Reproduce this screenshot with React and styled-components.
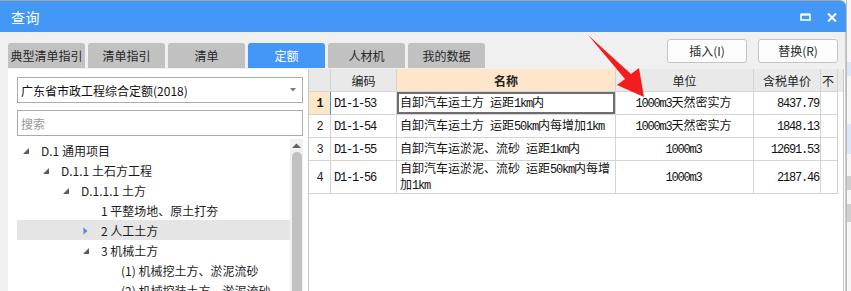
import React from "react";
import styled, { createGlobalStyle } from "styled-components";

const BLUE = "#4398f7";
const GRID = "#d4d4d4";

const GlobalStyle = createGlobalStyle`
  * { box-sizing: border-box; }
  body {
    margin: 0;
    background: #f4f4f4;
    font-family: "Noto Sans CJK SC", "Noto Sans", sans-serif;
    color: #1e1e1e;
  }
`;

const tabs = ["典型清单指引", "清单指引", "清单", "定额", "人材机", "我的数据"];
const ACTIVE_TAB = "定额";

// state: open = 展开, closed = 折叠, leaf = 无子项
const tree = [
  { level: 1, state: "open", label: "D.1 通用项目" },
  { level: 2, state: "open", label: "D.1.1 土石方工程" },
  { level: 3, state: "open", label: "D.1.1.1 土方" },
  { level: 4, state: "leaf", label: "1 平整场地、原土打夯" },
  { level: 4, state: "closed", label: "2 人工土方", selected: true },
  { level: 4, state: "open", label: "3 机械土方" },
  { level: 5, state: "leaf", label: "(1) 机械挖土方、淤泥流砂" },
  { level: 5, state: "leaf", label: "(2) 机械挖装土方、淤泥流砂" },
];

const columns = [
  { key: "no", title: "" },
  { key: "code", title: "编码" },
  { key: "name", title: "名称", hot: true },
  { key: "unit", title: "单位" },
  { key: "price", title: "含税单价" },
  { key: "extra", title: "不" },
];

const rows = [
  { code: "D1-1-53", name: ["自卸汽车运土方 运距1km内"], unit: "1000m3天然密实方", price: "8437.79" },
  { code: "D1-1-54", name: ["自卸汽车运土方 运距50km内每增加1km"], unit: "1000m3天然密实方", price: "1848.13" },
  { code: "D1-1-55", name: ["自卸汽车运淤泥、流砂 运距1km内"], unit: "1000m3", price: "12691.53" },
  { code: "D1-1-56", name: ["自卸汽车运淤泥、流砂 运距50km内每增", "加1km"], unit: "1000m3", price: "2187.46", tall: true },
];

// 宋体风格：西文部分用等宽字体，整行放在一个行内容器里保持基线一致
const mixed = (text) => (
  <Line>
    {text
      .split(/([\x20-\x7e]+)/)
      .filter(Boolean)
      .map((part, i) =>
        /^[\x20-\x7e]+$/.test(part) ? <Latin key={i}>{part}</Latin> : <span key={i}>{part}</span>
      )}
  </Line>
);

const App = () => {
  return (
    <>
      <GlobalStyle />
      <Screen>
        <Window>
          <TitleBar>
            <Title>查询</Title>
            <TitleButtons>
              <svg width="11" height="8" viewBox="0 0 11 8">
                <rect x="1" y="1.5" width="9" height="5.5" fill="none" stroke="#fff" strokeWidth="1.6" />
                <rect x="1" y="0.5" width="9" height="2" fill="#fff" />
              </svg>
              <svg width="10" height="9" viewBox="0 0 10 9">
                <path d="M1 0.5 L9 8.5 M9 0.5 L1 8.5" stroke="#fff" strokeWidth="2" />
              </svg>
            </TitleButtons>
          </TitleBar>

          <Body>
            <Toolbar>
              <Tabs>
                {tabs.map((t) => (
                  <Tab key={t} $active={t === ACTIVE_TAB}>
                    {t}
                  </Tab>
                ))}
              </Tabs>
              <Actions>
                <ActionButton>插入(I)</ActionButton>
                <ActionButton>替换(R)</ActionButton>
              </Actions>
            </Toolbar>

            <Content>
              <LeftPanel>
                <Select>
                  <span>广东省市政工程综合定额(2018)</span>
                  <svg width="6" height="4" viewBox="0 0 6 4">
                    <path d="M0 0 H6 L3 3.5 Z" fill="#7a7a7a" />
                  </svg>
                </Select>
                <Search>搜索</Search>
                <TreeArea>
                  <TreeList>
                    {tree.map((node, i) => (
                      <TreeRow key={i} $level={node.level} $selected={node.selected}>
                        <Toggle>
                          {node.state === "open" && (
                            <svg width="6" height="6" viewBox="0 0 6 6">
                              <path d="M6 0 V6 H0 Z" fill="#5c5c5c" />
                            </svg>
                          )}
                          {node.state === "closed" && (
                            <svg width="5" height="8" viewBox="0 0 5 8">
                              <path d="M0.5 0.5 L4.5 4 L0.5 7.5 Z" fill="#3d8fe8" />
                            </svg>
                          )}
                        </Toggle>
                        <TreeLabel>{node.label}</TreeLabel>
                      </TreeRow>
                    ))}
                  </TreeList>
                  <ScrollBar>
                    <svg width="9" height="5" viewBox="0 0 9 5">
                      <path d="M0 5 L4.5 0.5 L9 5 Z" fill="#606060" />
                    </svg>
                    <Thumb />
                  </ScrollBar>
                </TreeArea>
              </LeftPanel>

              <TablePanel>
                <GridRow $header>
                  {columns.map((c) => (
                    <HeadCell key={c.key} $hot={c.hot}>
                      {c.title}
                    </HeadCell>
                  ))}
                </GridRow>
                {rows.map((r, i) => (
                  <GridRow key={r.code} $tall={r.tall}>
                    <NoCell $current={i === 0}>{mixed(String(i + 1))}</NoCell>
                    <Cell $align="left">{mixed(r.code)}</Cell>
                    <Cell $align="left" $focused={i === 0} $wrap={r.tall}>
                      {r.name.map((line, k) => (
                        <React.Fragment key={k}>{mixed(line)}</React.Fragment>
                      ))}
                    </Cell>
                    <Cell $align="center">{mixed(r.unit)}</Cell>
                    <Cell $align="right">{mixed(r.price)}</Cell>
                    <Cell />
                  </GridRow>
                ))}
              </TablePanel>
              <EdgeStrip />
            </Content>
          </Body>
        </Window>
        <Outside>
          <Chip $h={14} $m={62} />
          <Chip $h={30} $m={48} />
          <Chip $h={14} $m={22} $gray />
          <Chip $h={18} $m={14} $gray />
        </Outside>

        <ArrowLayer width="851" height="291" viewBox="0 0 851 291">
          <polygon points="588,35 631,74 639,68 644,97 617,85 625,79" fill="#f41d1d" />
        </ArrowLayer>
      </Screen>
    </>
  );
};

export default App;

const Screen = styled.div`
  position: relative;
  display: flex;
  width: 851px;
  height: 291px;
  overflow: hidden;
`;

const Window = styled.div`
  display: flex;
  flex-direction: column;
  width: 846px;
  height: 100%;
  background: #f0f0f0;
  border-top: 1px solid #a3a3a3;
  border-top-right-radius: 6px;
  overflow: hidden;
`;

const TitleBar = styled.div`
  display: flex;
  align-items: center;
  justify-content: space-between;
  height: 31px;
  padding: 0 9px 0 11px;
  background: ${BLUE};
  color: #fff;
`;

const Title = styled.div`
  font-size: 14px;
  letter-spacing: 0.5px;
`;

const TitleButtons = styled.div`
  display: flex;
  align-items: center;
  gap: 16px;
  padding-top: 1px;
`;

const Body = styled.div`
  display: flex;
  flex-direction: column;
  flex: 1;
  min-height: 0;
  border-right: 1px solid #c6c6c6;
`;

const Toolbar = styled.div`
  display: flex;
  justify-content: space-between;
  height: 36px;
  padding: 0 7px 0 8px;
`;

const Tabs = styled.div`
  display: flex;
  align-self: flex-end;
  gap: 3px;
`;

const Tab = styled.div`
  width: 77px;
  height: 25px;
  line-height: 25px;
  text-align: center;
  font-size: 12px;
  white-space: nowrap;
  border-radius: 3px 3px 0 0;
  background: ${(p) => (p.$active ? BLUE : "#c1c1c1")};
  color: ${(p) => (p.$active ? "#fff" : "#262626")};
`;

const Actions = styled.div`
  display: flex;
  gap: 11px;
  margin-top: 7px;
`;

const ActionButton = styled.div`
  width: 80px;
  height: 24px;
  line-height: 22px;
  text-align: center;
  font-size: 12px;
  color: #2a2a2a;
  background: #fdfdfd;
  border: 1px solid #c4c4c4;
  border-radius: 3px;
`;

const Content = styled.div`
  display: flex;
  flex: 1;
  min-height: 0;
  margin-top: 1px;
  padding-left: 8px;
`;

const LeftPanel = styled.div`
  display: flex;
  flex-direction: column;
  width: 300px;
  padding: 8px 5px 0 9px;
  background: #fff;
`;

const Field = styled.div`
  display: flex;
  align-items: center;
  height: 26px;
  padding: 0 6px 0 3px;
  border: 1px solid #ababab;
  font-size: 12px;
`;

const Select = styled(Field)`
  justify-content: space-between;
  color: #111;
`;

const Search = styled(Field)`
  margin-top: 7px;
  color: #9a9a9a;
`;

const TreeArea = styled.div`
  display: flex;
  flex: 1;
  min-height: 0;
  margin-top: 3px;
`;

const TreeList = styled.div`
  flex: 1;
  padding-top: 1px;
`;

const TreeRow = styled.div`
  display: flex;
  align-items: center;
  height: 20px;
  padding-left: ${(p) => (p.$level - 1) * 20 + 6}px;
  background: ${(p) => (p.$selected ? "#e5e5e5" : "transparent")};
  font-size: 12px;
  white-space: nowrap;
`;

const Toggle = styled.div`
  display: flex;
  align-items: center;
  width: 18px;
  height: 20px;
  padding-top: 2px;
`;

const TreeLabel = styled.span`
  color: #1c1c1c;
`;

const ScrollBar = styled.div`
  display: flex;
  flex-direction: column;
  align-items: center;
  width: 13px;
  padding-top: 4px;
  background: #f0f0f0;
`;

const Thumb = styled.div`
  flex: 1;
  width: 10px;
  margin-top: 4px;
  background: #c1c1c1;
  border-radius: 5px 5px 0 0;
`;

const TablePanel = styled.div`
  width: 535px;
  background: #fff;
  border-left: 1px solid #c6c6c6;
`;

const GridRow = styled.div`
  display: grid;
  grid-template-columns: 22px 66px 219px 138px 67px 17px;
  height: ${(p) => (p.$tall ? 33 : 23)}px;
  background: ${(p) => (p.$header ? "#e9e9e9" : "#fff")};
`;

const BaseCell = styled.div`
  display: flex;
  align-items: center;
  overflow: hidden;
  white-space: nowrap;
  border-right: 1px solid ${GRID};
  border-bottom: 1px solid ${GRID};
  font-size: 12px;
`;

const HeadCell = styled(BaseCell)`
  justify-content: center;
  font-weight: ${(p) => (p.$hot ? 700 : 400)};
  background: ${(p) => (p.$hot ? "#fde6ca" : "transparent")};
  color: #222;
  &:last-child {
    justify-content: flex-start;
    padding-left: 1px;
  }
`;

const NoCell = styled(BaseCell)`
  justify-content: center;
  font-weight: ${(p) => (p.$current ? 700 : 400)};
  background: ${(p) => (p.$current ? "#fde6ca" : "#fff")};
  border-right-color: ${(p) => (p.$current ? "#3d8fe8" : GRID)};
`;

const Cell = styled(BaseCell)`
  flex-direction: ${(p) => (p.$wrap ? "column" : "row")};
  align-items: ${(p) => (p.$wrap ? "flex-start" : "center")};
  justify-content: ${(p) =>
    p.$wrap ? "center" : p.$align === "right" ? "flex-end" : p.$align === "center" ? "center" : "flex-start"};
  padding: 0 ${(p) => (p.$align === "right" ? 1 : 2)}px 0 ${(p) => (p.$align === "left" ? 3 : 0)}px;
  color: #111;
  box-shadow: ${(p) => (p.$focused ? "inset 0 0 0 2px #6e6e6e" : "none")};
`;

const Line = styled.span`
  display: block;
  line-height: 13px;
  white-space: nowrap;
`;

const Latin = styled.span`
  font-family: "Liberation Mono", monospace;
  font-size: 12px;
  letter-spacing: -1.2px;
`;

const EdgeStrip = styled.div`
  flex: 1;
  background: #fff;
  border-left: 1px solid #c6c6c6;
`;

const Outside = styled.div`
  display: flex;
  flex-direction: column;
  flex: 1;
  background: #f6f6f6;
  border-left: 1px solid #bcbcbc;
`;

const Chip = styled.div`
  height: ${(p) => p.$h}px;
  margin-top: ${(p) => p.$m}px;
  background: ${(p) => (p.$gray ? "#cfcfcf" : "#dbe7f6")};
`;

const ArrowLayer = styled.svg`
  position: absolute;
  left: 0;
  top: 0;
  pointer-events: none;
`;
